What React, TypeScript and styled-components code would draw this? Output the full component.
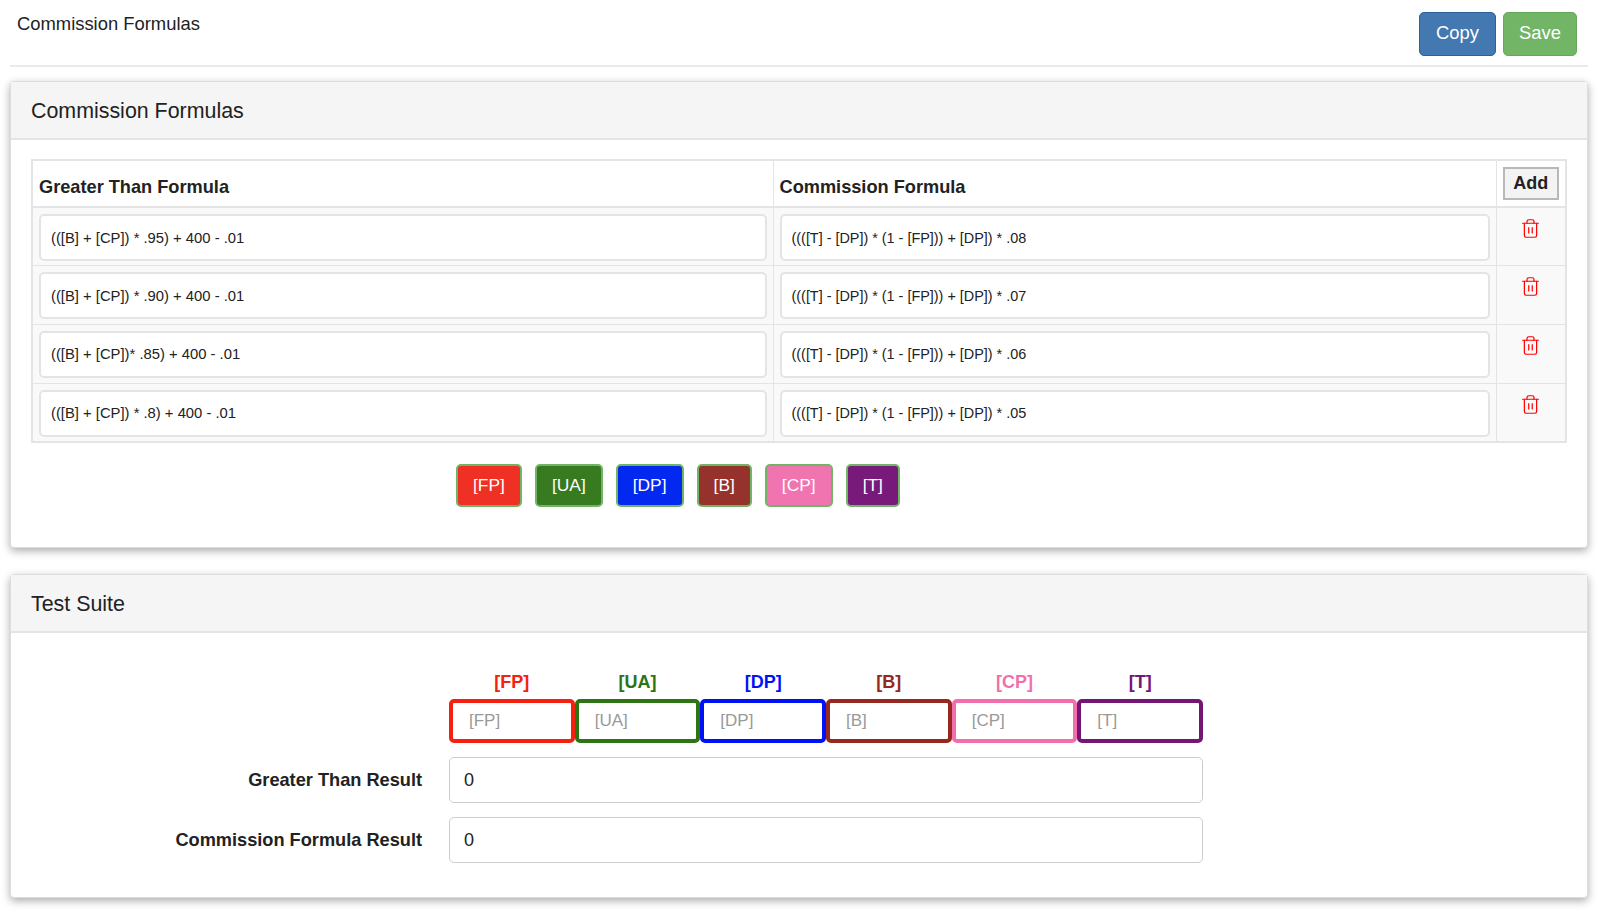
import React from "react";
import styled, { createGlobalStyle } from "styled-components";
import { Trash2 } from "lucide-react";

const GlobalStyle = createGlobalStyle`
  html, body {
    margin: 0;
    padding: 0;
    background: #fff;
    color: #222;
    font-family: "Liberation Sans", Arial, sans-serif;
  }
  * { box-sizing: border-box; }
`;

const Page = styled.div`
  width: 1600px;
  height: 915px;
  overflow: hidden;
  padding: 0 12px 0 10px;
`;

const TopBar = styled.div`
  display: flex;
  justify-content: space-between;
  height: 67px;
  margin: 0 0 14px;
  padding: 12px 11px 0 7px;
  border-bottom: 2px solid #e9ecef;
`;

const PageTitle = styled.div`
  font-size: 18.4px;
  line-height: 24px;
`;

const TopActions = styled.div`
  display: flex;
  gap: 7px;
  height: 44px;
`;

const ActionButton = styled.button<{ $bg: string; $border: string; $width: number }>`
  width: ${(p) => p.$width}px;
  padding: 0 0 2px;
  font: 18.4px "Liberation Sans", Arial, sans-serif;
  color: #fff;
  background: ${(p) => p.$bg};
  border: 1px solid ${(p) => p.$border};
  border-radius: 5px;
`;

const Panel = styled.section<{ $height: number }>`
  height: ${(p) => p.$height}px;
  margin-bottom: 26px;
  background: #fff;
  border: 1px solid #ddd;
  border-radius: 4px;
  box-shadow: 0 3px 9px rgba(0, 0, 0, 0.33);
`;

const PanelHeading = styled.h2`
  height: 58px;
  margin: 0;
  padding: 0 20px;
  font-size: 21.4px;
  font-weight: 400;
  line-height: 59px;
  background: #f5f5f5;
  border-bottom: 2px solid #e4e4e4;
`;

const PanelBody = styled.div`
  padding: 19px 20px 0 20px;
`;

const FormulaTable = styled.table`
  width: 1534px;
  table-layout: fixed;
  border-collapse: collapse;
  border: 2px solid #e4e4e4;
`;

const HeadCell = styled.th<{ $width: number }>`
  width: ${(p) => p.$width}px;
  height: 47px;
  padding: 8px 6px 0;
  font-size: 18.2px;
  text-align: left;
  border: 1px solid #e4e4e4;
  border-bottom-width: 2px;
  &:last-child { padding-top: 0; text-align: center; }
`;

const AddButton = styled.button`
  width: 56px;
  height: 33px;
  padding: 0;
  font: bold 18px "Liberation Sans", Arial, sans-serif;
  color: #222;
  background: #f3f3f3;
  border: 2px solid #b8b8b8;
`;

const Row = styled.tr`
  height: 58.7px;
  background: #f9f9f9;
`;

const Cell = styled.td`
  padding: 0 6px;
  vertical-align: top;
  border: 1px solid #e4e4e4;
  &:last-child { padding-top: 10px; text-align: center; color: #f00; }
`;

const FormulaInput = styled.input<{ $size: number }>`
  display: block;
  width: 100%;
  height: 47px;
  margin-top: 6px;
  padding: 0 10px;
  font: ${(p) => p.$size}px "Liberation Sans", Arial, sans-serif;
  color: #222;
  background: #fff;
  border: 2px solid #e4e4e4;
  border-radius: 5px;
  outline: none;
`;

const ChipRow = styled.div`
  display: flex;
  gap: 13px;
  margin: 21px 0 0 425px;
`;

const Chip = styled.button<{ $bg: string }>`
  height: 43px;
  padding: 0 15px;
  font: 17.4px "Liberation Sans", Arial, sans-serif;
  color: #fff;
  background: ${(p) => p.$bg};
  border: 2px solid #70b466;
  border-radius: 5px;
`;

const TestBody = styled.div`
  padding: 38px 0 0 438px;
`;

const VariableGrid = styled.div`
  display: grid;
  grid-template-columns: repeat(6, 1fr);
  width: 754px;
  margin-bottom: 14px;
`;

const VariableField = styled.div<{ $color: string }>`
  color: ${(p) => p.$color};
  text-align: center;
`;

const VariableLabel = styled.div`
  height: 28px;
  font-size: 18px;
  font-weight: 700;
  line-height: 22px;
`;

const VariableInput = styled.input<{ $color: string }>`
  display: block;
  width: 100%;
  height: 44px;
  padding: 0 16px;
  font: 17px "Liberation Sans", Arial, sans-serif;
  background: #fff;
  border: 4px solid ${(p) => p.$color};
  border-radius: 5px;
  outline: none;
  &::placeholder { color: #999; opacity: 1; }
`;

const ResultRow = styled.div`
  display: flex;
  align-items: center;
  position: relative;
  width: 754px;
  margin-bottom: 14px;
`;

const ResultLabel = styled.label`
  position: absolute;
  right: 781px;
  font-size: 18.2px;
  font-weight: 700;
  white-space: nowrap;
`;

const ResultInput = styled.input`
  width: 100%;
  height: 46px;
  padding: 0 14px;
  font: 18px "Liberation Sans", Arial, sans-serif;
  color: #222;
  background: #fff;
  border: 1px solid #ccc;
  border-radius: 5px;
  outline: none;
`;

const formulas = [
  ["(([B] + [CP]) * .95) + 400 - .01", "((([T] - [DP]) * (1 - [FP])) + [DP]) * .08"],
  ["(([B] + [CP]) * .90) + 400 - .01", "((([T] - [DP]) * (1 - [FP])) + [DP]) * .07"],
  ["(([B] + [CP])* .85) + 400 - .01", "((([T] - [DP]) * (1 - [FP])) + [DP]) * .06"],
  ["(([B] + [CP]) * .8) + 400 - .01", "((([T] - [DP]) * (1 - [FP])) + [DP]) * .05"],
];

const variables = [
  { name: "[FP]", chip: "#ee3124", color: "#f5200f" },
  { name: "[UA]", chip: "#377a1f", color: "#2f7414" },
  { name: "[DP]", chip: "#0328f0", color: "#0012f5" },
  { name: "[B]", chip: "#96322c", color: "#962820" },
  { name: "[CP]", chip: "#f074b0", color: "#f26eac" },
  { name: "[T]", chip: "#771a7a", color: "#751576" },
];

export default function App() {
  return (
    <Page>
      <GlobalStyle />
      <TopBar>
        <PageTitle>Commission Formulas</PageTitle>
        <TopActions>
          <ActionButton $bg="#4478b0" $border="#2e6297" $width={77}>Copy</ActionButton>
          <ActionButton $bg="#72b566" $border="#63a95a" $width={74}>Save</ActionButton>
        </TopActions>
      </TopBar>

      <Panel $height={467}>
        <PanelHeading>Commission Formulas</PanelHeading>
        <PanelBody>
          <FormulaTable>
            <thead>
              <tr>
                <HeadCell $width={741}>Greater Than Formula</HeadCell>
                <HeadCell $width={723}>Commission Formula</HeadCell>
                <HeadCell $width={70}><AddButton>Add</AddButton></HeadCell>
              </tr>
            </thead>
            <tbody>
              {formulas.map(([gt, comm]) => (
                <Row key={gt}>
                  <Cell><FormulaInput readOnly value={gt} $size={14.8} /></Cell>
                  <Cell><FormulaInput readOnly value={comm} $size={14.4} /></Cell>
                  <Cell><Trash2 size={21} strokeWidth={1.4} /></Cell>
                </Row>
              ))}
            </tbody>
          </FormulaTable>
          <ChipRow>
            {variables.map((v) => (
              <Chip key={v.name} $bg={v.chip}>{v.name}</Chip>
            ))}
          </ChipRow>
        </PanelBody>
      </Panel>

      <Panel $height={324}>
        <PanelHeading>Test Suite</PanelHeading>
        <TestBody>
          <VariableGrid>
            {variables.map((v) => (
              <VariableField key={v.name} $color={v.color}>
                <VariableLabel>{v.name}</VariableLabel>
                <VariableInput placeholder={v.name} $color={v.color} />
              </VariableField>
            ))}
          </VariableGrid>
          <ResultRow>
            <ResultLabel>Greater Than Result</ResultLabel>
            <ResultInput readOnly value="0" />
          </ResultRow>
          <ResultRow>
            <ResultLabel>Commission Formula Result</ResultLabel>
            <ResultInput readOnly value="0" />
          </ResultRow>
        </TestBody>
      </Panel>
    </Page>
  );
}
